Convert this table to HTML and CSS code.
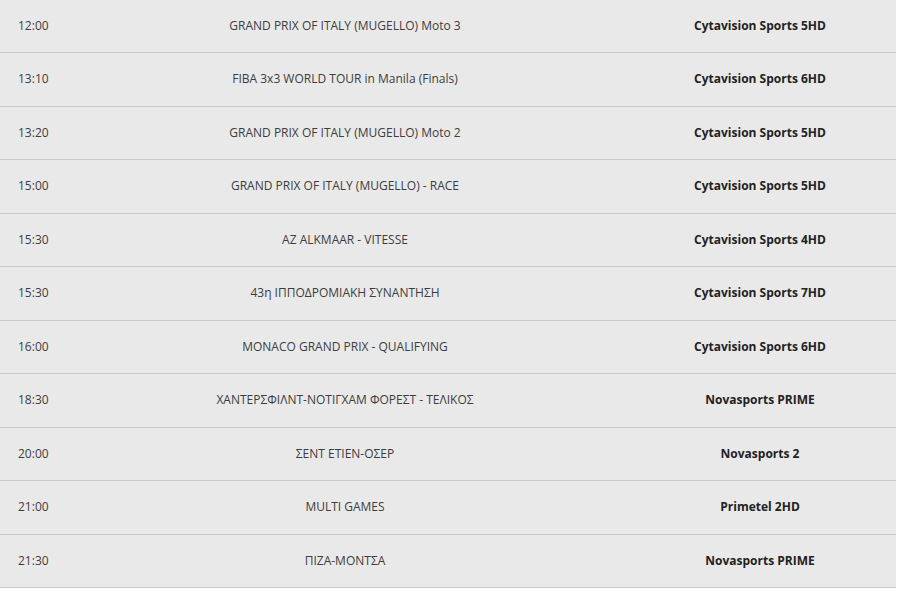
FILE: index.html
```html
<!DOCTYPE html>
<html>
<head>
<meta charset="utf-8">
<link rel="stylesheet" href="styles.css">
</head>
<body>
<table class="schedule">
<tbody>
<tr><td class="time">12:00</td><td class="event">GRAND PRIX OF ITALY (MUGELLO) Moto 3</td><td class="channel">Cytavision Sports 5HD</td></tr>
<tr><td class="time">13:10</td><td class="event">FIBA 3x3 WORLD TOUR in Manila (Finals)</td><td class="channel">Cytavision Sports 6HD</td></tr>
<tr><td class="time">13:20</td><td class="event">GRAND PRIX OF ITALY (MUGELLO) Moto 2</td><td class="channel">Cytavision Sports 5HD</td></tr>
<tr><td class="time">15:00</td><td class="event">GRAND PRIX OF ITALY (MUGELLO) - RACE</td><td class="channel">Cytavision Sports 5HD</td></tr>
<tr><td class="time">15:30</td><td class="event">AZ ALKMAAR - VITESSE</td><td class="channel">Cytavision Sports 4HD</td></tr>
<tr><td class="time">15:30</td><td class="event">43η ΙΠΠΟΔΡΟΜΙΑΚΗ ΣΥΝΑΝΤΗΣΗ</td><td class="channel">Cytavision Sports 7HD</td></tr>
<tr><td class="time">16:00</td><td class="event">MONACO GRAND PRIX - QUALIFYING</td><td class="channel">Cytavision Sports 6HD</td></tr>
<tr><td class="time">18:30</td><td class="event">ΧΑΝΤΕΡΣΦΙΛΝΤ-ΝΟΤΙΓΧΑΜ ΦΟΡΕΣΤ - ΤΕΛΙΚΟΣ</td><td class="channel">Novasports PRIME</td></tr>
<tr><td class="time">20:00</td><td class="event">ΣΕΝΤ ΕΤΙΕΝ-ΟΣΕΡ</td><td class="channel">Novasports 2</td></tr>
<tr><td class="time">21:00</td><td class="event">MULTI GAMES</td><td class="channel">Primetel 2HD</td></tr>
<tr><td class="time">21:30</td><td class="event">ΠΙΖΑ-ΜΟΝΤΣΑ</td><td class="channel">Novasports PRIME</td></tr>
</tbody>
</table>
</body>
</html>
```
FILE: styles.css
```css
html, body {
  margin: 0;
  padding: 0;
  background: #ffffff;
}
body {
  font-family: "Open Sans", "Noto Sans", sans-serif;
  font-size: 12px;
  color: #3d3d3d;
}
.schedule {
  width: 896px;
  border-collapse: collapse;
  background: #e9e9e9;
}
.schedule td {
  height: 51.5px;
  padding: 0 0 1px 0;
  border-bottom: 1px solid #c8c8c8;
  vertical-align: middle;
}
.schedule tr:first-child td {
  height: 51px;
}
.schedule td.time {
  width: 48px;
  padding-left: 18px;
  text-align: left;
}
.event {
  width: 558px;
  text-align: center;
}
.channel {
  width: 272px;
  text-align: center;
  font-weight: bold;
  color: #222222;
}
```
